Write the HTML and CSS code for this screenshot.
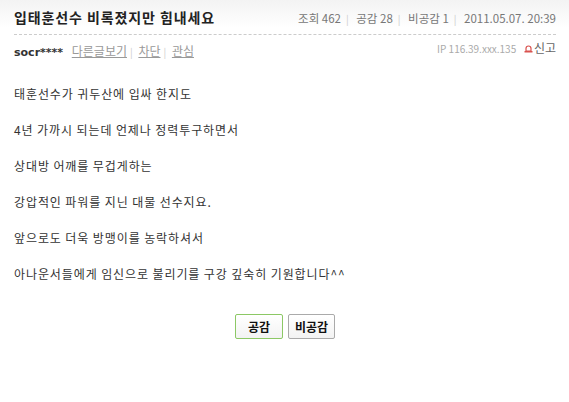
FILE: index.html
```html
<!DOCTYPE html>
<html>
<head>
    <title>입태훈선수 비록졌지만 힘내세요</title>
    <link rel="stylesheet" href="styles.css">
</head>
<body>
    <div class="post">
        <div class="post-head">
            <h3 class="title">입태훈선수 비록졌지만 힘내세요</h3>
            <div class="meta">
                <span>조회 462</span><span class="bar">|</span>
                <span>공감 28</span><span class="bar">|</span>
                <span>비공감 1</span><span class="bar">|</span>
                <span>2011.05.07. 20:39</span>
            </div>
        </div>

        <div class="writer">
            <div class="writer-left">
                <span class="nick">socr****</span>
                <a href="#">다른글보기</a><span class="bar">|</span>
                <a href="#">차단</a><span class="bar">|</span>
                <a href="#">관심</a>
            </div>
            <div class="writer-right">
                <span class="ip">IP 116.39.xxx.135</span>
                <a href="#" class="report">
                    <svg width="9" height="8" viewBox="0 0 9 8">
                        <path d="M2 6 L2 3.5 Q2 1 4.5 1 Q7 1 7 3.5 L7 6 Z" fill="none" stroke="#d9534f" stroke-width="1.2"/>
                        <rect x="0.5" y="6" width="8" height="1.5" fill="#d9534f"/>
                    </svg>신고</a>
            </div>
        </div>

        <div class="content">
            <p>태훈선수가 귀두산에 입싸 한지도</p>
            <p>4년 가까시 되는데 언제나 정력투구하면서</p>
            <p>상대방 어깨를 무겁게하는</p>
            <p>강압적인 파워를 지닌 대물 선수지요.</p>
            <p>앞으로도 더욱 방맹이를 농락하셔서</p>
            <p>아나운서들에게 임신으로 불리기를 구강 깊숙히 기원합니다^^</p>
        </div>

        <div class="vote">
            <button class="btn btn-good">공감</button>
            <button class="btn btn-bad">비공감</button>
        </div>
    </div>
</body>
</html>
```

FILE: styles.css
```css
html {
    background: #fff;
}

body {
    margin: 0;
    min-height: 402px;
    background: #fff linear-gradient(#f3f3f3, #ffffff 28px) no-repeat;
    font-family: "Noto Sans CJK KR", "DejaVu Sans", sans-serif;
    color: #333;
}

.post {
    padding: 0 13px 0 14px;
}

.post-head {
    display: flex;
    justify-content: space-between;
    align-items: center;
    height: 34px;
    border-bottom: 1px dashed #ccc;
}

.title {
    margin: 0;
    font-size: 14px;
    font-weight: bold;
    color: #222;
    letter-spacing: 0.9px;
}

.meta {
    font-size: 11.5px;
    color: #777;
    padding-top: 2px;
}

.bar {
    color: #ccc;
    font-size: 10px;
    margin: 0 5px;
}

.writer {
    display: flex;
    justify-content: space-between;
    align-items: center;
    height: 30px;
}

.writer-left {
    font-size: 12px;
    color: #888;
}

.writer-left a {
    color: #999;
}

.writer-left .bar {
    margin: 0 3px;
}

.nick {
    font-family: "DejaVu Sans", sans-serif;
    font-weight: bold;
    font-size: 11px;
    color: #333;
    margin-right: 6px;
}

.writer-right {
    font-size: 12px;
    margin-top: -6px;
}

.ip {
    font-size: 10px;
    color: #aaa;
    margin-right: 5px;
}

.report {
    color: #666;
    text-decoration: none;
}

.report svg {
    margin-right: 1px;
}

.content {
    padding-top: 20px;
    font-size: 12px;
    letter-spacing: 0.9px;
    color: #333;
}

.content p {
    margin: 0;
    height: 36px;
    line-height: 18px;
}

.vote {
    display: flex;
    justify-content: center;
    gap: 5px;
    margin-top: 13px;
}

.btn {
    height: 25px;
    padding: 0;
    font-family: "Noto Sans CJK KR", sans-serif;
    font-size: 12px;
    font-weight: bold;
    color: #111;
    background: linear-gradient(#ffffff, #f3f3f3);
    border-radius: 2px;
    cursor: pointer;
}

.btn-good {
    width: 48px;
    border: 1px solid #8cc865;
}

.btn-bad {
    width: 47px;
    border: 1px solid #aaa;
}
```
